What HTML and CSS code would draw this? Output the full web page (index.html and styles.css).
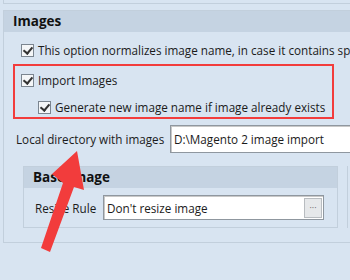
FILE: index.html
```html
<!DOCTYPE html>
<html>
<head>
<meta charset="utf-8">
<link rel="stylesheet" href="styles.css">
</head>
<body>
<div class="page">
  <div class="prev"></div>
  <div class="group">
    <div class="ghead">Images</div>
    <div class="gbody">
      <label class="row r1"><span class="cb"></span>This option normalizes image name, in case it contains spe</label>
      <div class="redbox">
        <label class="row r2"><span class="cb"></span>Import Images</label>
        <label class="row r3"><span class="cb"></span>Generate new image name if image already exists</label>
      </div>
      <div class="dirrow">
        <span class="lbl">Local directory with images</span>
        <div class="input dir">D:\Magento 2 image import</div>
      </div>
      <div class="subs">
        <div class="sub">
          <div class="shead">Base Image</div>
          <div class="sbody">
            <span class="lbl">Resize Rule</span>
            <div class="input rule"><span class="val">Don't resize image</span><span class="btn">···</span></div>
          </div>
        </div>
        <div class="sub2"></div>
      </div>
    </div>
  </div>
  <svg class="arrow" width="350" height="280" viewBox="0 0 350 280">
    <polygon points="41,248 50,252 74,187 84,190 77,151 52,174 63,183" fill="#f23c3c"/>
  </svg>
</div>
</body>
</html>
```
FILE: styles.css
```css
html, body {
  margin: 0;
  padding: 0;
  background: #d8e4f1;
}
.page {
  position: relative;
  width: 350px;
  height: 280px;
  overflow: hidden;
  font-family: "Open Sans", "Noto Sans", sans-serif;
  font-size: 11.7px;
  color: #1b1b1b;
}
.prev {
  margin-left: 3px;
  height: 3px;
  width: 400px;
  border-left: 1px solid #c2cfdc;
  border-bottom: 1px solid #c2cfdc;
}
.group {
  margin: 6px 0 0 3px;
  width: 400px;
  height: 233px;
  border: 1px solid #c2cfdc;
  box-sizing: border-box;
}
.ghead {
  height: 21px;
  background: #c5d3e2;
  font-weight: bold;
  font-size: 13.5px;
  line-height: 21px;
  padding-left: 9px;
  color: #111;
}
.gbody {
  display: flex;
  flex-direction: column;
}
.row {
  display: flex;
  align-items: center;
  white-space: nowrap;
  height: 16px;
}
.cb {
  width: 11px;
  height: 11px;
  border: 1px solid #7b8590;
  background: #f4f6f8;
  margin-right: 4px;
  flex: none;
  position: relative;
}
.cb::after {
  content: "";
  position: absolute;
  left: 3px;
  top: 0px;
  width: 4px;
  height: 7px;
  border-right: 2px solid #333;
  border-bottom: 2px solid #333;
  transform: rotate(40deg);
}
.r1 {
  margin: 10px 0 0 17px;
}
.redbox {
  margin: 6px 0 0 9px;
  width: 321px;
  height: 55px;
  border: 2px solid #f23c3c;
  box-sizing: border-box;
  display: flex;
  flex-direction: column;
}
.r2 {
  margin: 6px 0 0 6px;
}
.r3 {
  margin: 11px 0 0 23px;
}
.dirrow {
  display: flex;
  align-items: center;
  margin: 6px 0 0 12px;
  height: 28px;
}
.dirrow .lbl {
  width: 154px;
  white-space: nowrap;
}
.input {
  background: #fff;
  border: 1px solid #8f979f;
  box-shadow: inset 1px 1px 0 #c8c8c8;
  box-sizing: border-box;
  display: flex;
  align-items: center;
  white-space: nowrap;
}
.dir {
  height: 28px;
  width: 200px;
  padding-left: 3px;
}
.subs {
  display: flex;
  margin: 13px 0 0 19px;
  gap: 9px;
}
.sub {
  width: 315px;
  height: 62px;
  border: 1px solid #c2cfdc;
  box-sizing: border-box;
}
.sub2 {
  width: 40px;
  height: 62px;
  border-left: 1px solid #c2cfdc;
}
.shead {
  height: 21px;
  background: #c5d3e2;
  font-weight: bold;
  font-size: 13.5px;
  line-height: 21px;
  padding-left: 9px;
  color: #111;
}
.sbody {
  display: flex;
  align-items: center;
  margin: 7px 0 0 11px;
}
.sbody .lbl {
  width: 68px;
  white-space: nowrap;
}
.rule {
  width: 221px;
  height: 25px;
  padding-left: 3px;
  justify-content: space-between;
}
.btn {
  width: 18px;
  height: 20px;
  margin-right: 1px;
  border: 1px solid #b8bcc0;
  background: #e6e8ea;
  box-sizing: border-box;
  font-size: 9px;
  color: #666;
  display: flex;
  align-items: center;
  justify-content: center;
}
.arrow {
  position: absolute;
  left: 0;
  top: 0;
}
```
